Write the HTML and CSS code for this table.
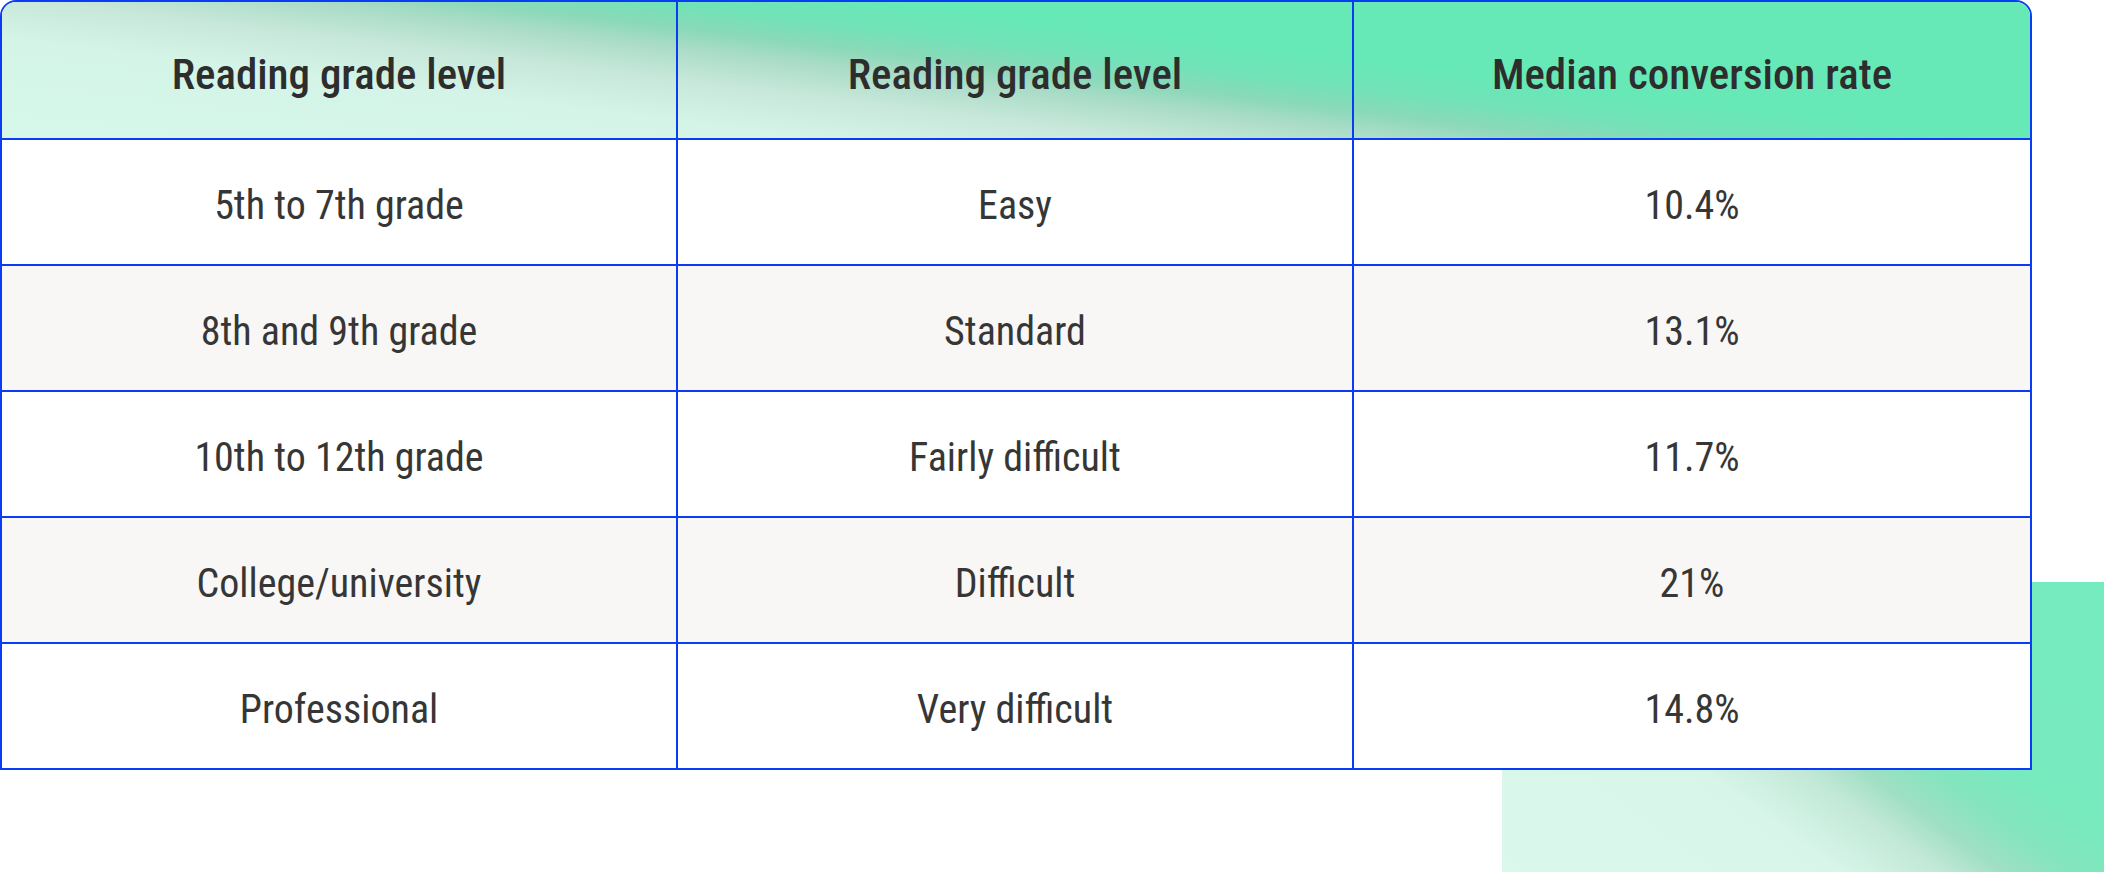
FILE: index.html
```html
<!DOCTYPE html>
<html lang="en">
<head>
<meta charset="utf-8">
<title>Reading grade level</title>
<link rel="stylesheet" href="styles.css">
</head>
<body>
<div class="page">
  <div class="deco"></div>
  <div class="grid-table">
    <div class="row head">
      <div class="cell">Reading grade level</div>
      <div class="cell">Reading grade level</div>
      <div class="cell">Median conversion rate</div>
    </div>
    <div class="row">
      <div class="cell">5th to 7th grade</div>
      <div class="cell">Easy</div>
      <div class="cell">10.4%</div>
    </div>
    <div class="row alt">
      <div class="cell">8th and 9th grade</div>
      <div class="cell">Standard</div>
      <div class="cell">13.1%</div>
    </div>
    <div class="row">
      <div class="cell">10th to 12th grade</div>
      <div class="cell">Fairly difficult</div>
      <div class="cell">11.7%</div>
    </div>
    <div class="row alt">
      <div class="cell">College/university</div>
      <div class="cell">Difficult</div>
      <div class="cell">21%</div>
    </div>
    <div class="row">
      <div class="cell">Professional</div>
      <div class="cell">Very difficult</div>
      <div class="cell">14.8%</div>
    </div>
  </div>
</div>
</body>
</html>
```
FILE: styles.css
```css
* { box-sizing: border-box; }
html, body {
  margin: 0;
  padding: 0;
  background: #ffffff;
}
body {
  font-family: "Roboto Condensed", "Liberation Sans Narrow", "DejaVu Sans Condensed", sans-serif;
  color: #363636;
}
.page {
  position: relative;
  width: 2104px;
  height: 872px;
  overflow: hidden;
}
.deco {
  position: absolute;
  left: 1502px;
  top: 582px;
  right: 0;
  bottom: 0;
  background: linear-gradient(36deg, #daf8ec 0%, #d7f5e9 34%, #c2e8d7 44%, #a0dfc4 50%, #84e5be 57%, #77eabe 66%, #74ebbe 100%);
}
.grid-table {
  position: relative;
  width: 2032px;
  border: 2px solid #0a3cf5;
  border-radius: 16px 16px 0 0;
  overflow: hidden;
  background: #ffffff;
}
.row {
  display: grid;
  grid-template-columns: 1fr 1fr 1fr;
  height: 126px;
  border-bottom: 2px solid #0a3cf5;
  background: #ffffff;
}
.row:last-child { border-bottom: 0; height: 124px; }
.row.alt { background: #f8f7f5; }
.row.head {
  height: 138px;
  background: linear-gradient(7deg, #d6f8eb 0%, #d3f4e6 26%, #c6e7d9 37%, #aadcc8 45%, #8bd9b9 50%, #72e2b8 56%, #67e8b7 63%, #66e9b7 100%);
}
.cell {
  display: flex;
  align-items: center;
  justify-content: center;
  padding-top: 7px;
  font-size: 40px;
  border-right: 2px solid #0a3cf5;
}
.cell:last-child { border-right: 0; }
.head .cell {
  font-weight: 500;
  font-size: 43px;
  color: #2d2d2d;
}
```
